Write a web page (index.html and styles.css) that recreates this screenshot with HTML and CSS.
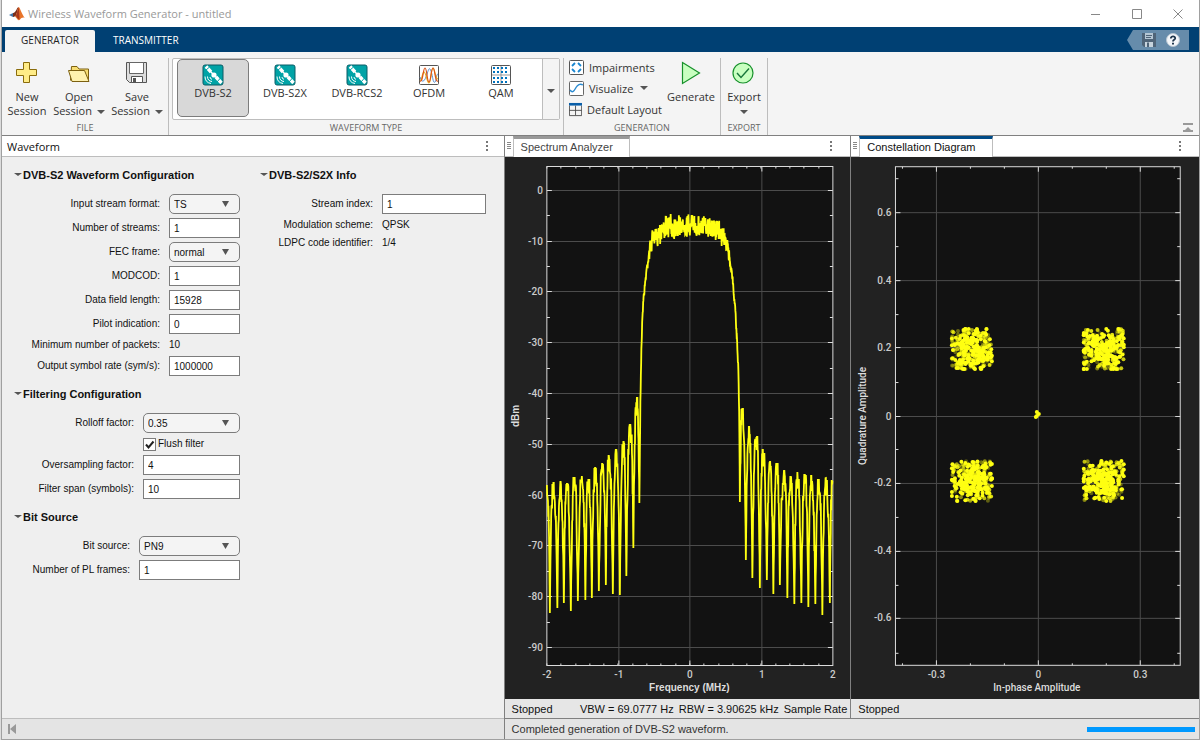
FILE: index.html
```html
<!DOCTYPE html>
<html lang="en">
<head>
<meta charset="utf-8">
<title>Wireless Waveform Generator - untitled</title>
<link rel="stylesheet" href="styles.css">
</head>
<body>
<svg class="defs" width="0" height="0" aria-hidden="true">
  <symbol id="satellite" viewBox="0 0 22 22">
    <rect x="1" y="1" width="20" height="20" rx="2" fill="#00a3a6" stroke="#0b5c66"/>
    <path d="M4 2.500l5 5.500M14 13l5.500 6" stroke="#fff" stroke-width="3.400"/>
    <path d="M3.500 6.500l4-3.500M15 18l3.500-4" stroke="#00a3a6"/>
    <path d="M8 7l7 7" stroke="#fff" stroke-width="1.500"/>
    <circle cx="12" cy="11" r="2.600" fill="#fff"/>
    <path d="M8 13q0 2 2 2.300M5.500 12.500q0 4.500 4.500 5M3 12.500q0 6 6 7" fill="none" stroke="#fff"/>
  </symbol>
  <symbol id="grip" viewBox="0 0 6 10">
    <path d="M1 1.500h4M1 3.500h4M1 5.500h4M1 7.500h4" stroke="#888"/>
  </symbol>
  <symbol id="dots" viewBox="0 0 4 12">
    <path d="M1 1h2v2H1zM1 5h2v2H1zM1 9h2v2H1z" fill="#777"/>
  </symbol>
</svg>

<div class="window">
  <header class="titlebar">
    <svg class="logo" width="16" height="14" viewBox="0 0 16 14">
      <path d="M0 8l4-2 3 2-3 2z" fill="#3f74a8"/>
      <path d="M4 6c3-.5 3.500-5 5.500-6L7 9l-3 1z" fill="#7a2f1c"/>
      <path d="M9.500 0C11 0 13 8 16 11c-2-1-4 0-5 1.500C10 14 8.500 13 7.500 11L6 9.500C8 7 8.500 2 9.500 0z" fill="#e8742a"/>
      <path d="M9.500 0c.5 3 1 8 1 12.500C9 12 8 11 7 9z" fill="#a8371c"/>
    </svg>
    <h1 class="app-title">Wireless Waveform Generator - untitled</h1>
    <div class="win-buttons">
      <button aria-label="Minimize"><svg width="12" height="12" viewBox="0 0 12 12"><path d="M1 6.500h9" stroke="#888"/></svg></button>
      <button aria-label="Maximize"><svg width="12" height="12" viewBox="0 0 12 12"><path d="M1.500 1.500h9v9h-9z" fill="none" stroke="#888"/></svg></button>
      <button aria-label="Close"><svg width="12" height="12" viewBox="0 0 12 12"><path d="M1.500 1.500l9 9M10.500 1.500l-9 9" stroke="#888"/></svg></button>
    </div>
  </header>

  <nav class="tabs">
    <button class="tab active">GENERATOR</button>
    <button class="tab">TRANSMITTER</button>
    <div class="quick">
      <button aria-label="Save"><svg width="16" height="16" viewBox="0 0 16 16">
        <path d="M1 1h14v14H3l-2-2z" fill="#4f6478"/><path d="M4 1h8v6H4z" fill="#b4c6d4"/><path d="M5 3.500h6M5 5.500h5" stroke="#4f6478"/><path d="M4 10h8v5H4z" fill="#c6d3dd"/><path d="M6 10.500h2V15H6z" fill="#4f6478"/>
      </svg></button>
      <button aria-label="Help"><svg width="14" height="14" viewBox="0 0 14 14">
        <circle cx="7" cy="7" r="6.500" fill="#f4f7fa" stroke="#b8c6d2"/><path d="M4.800 5.500c0-3 4.600-2.800 4.400 0C9 7 7 6.800 7 8.500" fill="none" stroke="#20374d" stroke-width="1.800"/><path d="M6 9.800h2v1.700H6z" fill="#20374d"/>
      </svg></button>
    </div>
  </nav>

  <div class="ribbon">
    <section class="group">
      <div class="tools file-tools">
        <button class="tool new"><svg width="24" height="24" viewBox="0 0 24 24"><path d="M8.500 1.500h6v7h7v6h-7v7h-6v-7h-7v-6h7z" fill="#ffec87" stroke="#8a6c0c"/></svg><span>New</span><span>Session</span></button>
        <button class="tool open"><svg width="24" height="24" viewBox="0 0 24 24"><path d="M3.500 19.500L4.500 5.500H10l2 2.500h9.500v11.500" fill="#f7dd72" stroke="#7c6010"/><path d="M1.500 9.500h16l4.500 11H5z" fill="#fff2ae" stroke="#7c6010"/></svg><span>Open</span><span>Session <i class="caret"></i></span></button>
        <button class="tool save"><svg width="24" height="24" viewBox="0 0 24 24"><path d="M1.500 1.500h20v20h-17l-3-3z" fill="#ddd" stroke="#555"/><path d="M4.500 1.500h14v11h-14z" fill="#fff" stroke="#666"/><path d="M6.500 15.500h11v6h-11z" fill="#fff" stroke="#555"/><path d="M8 17h3v4.500H8z" fill="#555"/></svg><span>Save</span><span>Session <i class="caret"></i></span></button>
      </div>
      <h2 class="group-name">FILE</h2>
    </section>

    <section class="group type-group">
      <div class="tools gallery">
        <button class="wave selected"><svg width="22" height="22"><use href="#satellite"/></svg><span>DVB-S2</span></button>
        <button class="wave"><svg width="22" height="22"><use href="#satellite"/></svg><span>DVB-S2X</span></button>
        <button class="wave"><svg width="22" height="22"><use href="#satellite"/></svg><span>DVB-RCS2</span></button>
        <button class="wave"><svg width="22" height="22" viewBox="0 0 22 22"><rect x="1.500" y="1.500" width="19" height="19" rx="1" fill="#fff" stroke="#555"/><g fill="none"><path d="M2 13c2 6 4 5 6 0s3-12 5-6 2 13 4 11 1-8 3-8" stroke="#5a8fd0"/><path d="M2 16c2 2 2-8 4-8s3 11 5 11 2-15 4-15 2 11 5 11" stroke="#edb120" stroke-width="1.200"/><path d="M2 17C5 19 5 4 7 4s2 14 4 14 2-14 4-14 2 15 5 13" stroke="#d95319" stroke-width="1.200"/></g></svg><span>OFDM</span></button>
        <button class="wave"><svg width="22" height="22" viewBox="0 0 22 22"><rect x="1.500" y="1.500" width="19" height="19" rx="1" fill="#fff" stroke="#555"/><path d="M11 2v18M2 11h18" stroke="#999"/><path d="M3 4h16M3 8h16M3 14h16M3 18h16" stroke="#0072bd" stroke-width="2" stroke-dasharray="2 2"/></svg><span>QAM</span></button>
        <button class="more" aria-label="More waveforms"><i class="caret"></i></button>
      </div>
      <h2 class="group-name">WAVEFORM TYPE</h2>
    </section>

    <section class="group">
      <div class="tools gen-tools">
        <div class="stack">
          <button class="line"><svg width="15" height="15" viewBox="0 0 15 15"><rect x=".5" y=".5" width="14" height="14" rx="1" fill="#fff" stroke="#555"/><path d="M3 6l3-3M9 3l3 3M3 9l3 3M12 9l-3 3" stroke="#1a86d0" stroke-width="1.800"/></svg><span>Impairments</span></button>
          <button class="line"><svg width="15" height="15" viewBox="0 0 15 15"><rect x=".5" y=".5" width="14" height="14" rx="1" fill="#fff" stroke="#666"/><path d="M1 9c3 4 4.500 0 6-2.500S11 2 14 4" fill="none" stroke="#2a8ad0" stroke-width="1.400"/></svg><span>Visualize</span><i class="caret"></i></button>
          <button class="line"><svg width="15" height="15" viewBox="0 0 15 15"><path d="M.5 3v11.500h14V3M.5 8.500h14M7.500 3v11" fill="none" stroke="#444"/><path d="M0 0h15v3H0z" fill="#0a5ea8"/></svg><span>Default Layout</span></button>
        </div>
        <button class="tool generate"><svg width="24" height="24" viewBox="0 0 24 24"><path d="M3.500 1.500l17 10.500-17 10.500z" fill="#c8ffc0" stroke="#17912b" stroke-width="1.200"/></svg><span>Generate</span></button>
      </div>
      <h2 class="group-name">GENERATION</h2>
    </section>

    <section class="group">
      <div class="tools">
        <button class="tool export"><svg width="24" height="24" viewBox="0 0 24 24"><circle cx="11" cy="12" r="10" fill="#c8ffc0" stroke="#17912b" stroke-width="1.200"/><path d="M5 12l4 4.500 8-9" fill="none" stroke="#17753a" stroke-width="1.400"/></svg><span>Export</span><span><i class="caret"></i></span></button>
      </div>
      <h2 class="group-name">EXPORT</h2>
    </section>
    <button class="collapse" aria-label="Collapse toolstrip"><svg width="10" height="10" viewBox="0 0 10 10"><path d="M0 0h10v2H0zM5 4l3 3h2v2H0V7h2z" fill="#999"/></svg></button>
  </div>

  <main class="main">
    <section class="left">
      <header class="pane-head"><h2>Waveform</h2><button class="menu" aria-label="Panel menu"><svg width="4" height="12"><use href="#dots"/></svg></button></header>
      <form class="form">
        <div class="form-col">
          <fieldset class="fields k71">
            <legend><i class="caret"></i>DVB-S2 Waveform Configuration</legend>
            <label for="fmt">Input stream format:</label><select id="fmt"><option>TS</option></select>
            <label for="ns">Number of streams:</label><input id="ns" value="1">
            <label for="fec">FEC frame:</label><select id="fec"><option>normal</option></select>
            <label for="mod">MODCOD:</label><input id="mod" value="1">
            <label for="dfl">Data field length:</label><input id="dfl" value="15928">
            <label for="pil">Pilot indication:</label><input id="pil" value="0">
            <label for="minp">Minimum number of packets:</label><output id="minp">10</output>
            <label for="rate">Output symbol rate (sym/s):</label><input id="rate" value="1000000">
          </fieldset>
          <fieldset class="fields k97">
            <legend><i class="caret"></i>Filtering Configuration</legend>
            <label for="roll">Rolloff factor:</label><select id="roll"><option>0.35</option></select>
            <label class="check" for="flush"><input type="checkbox" id="flush" checked>Flush filter</label>
            <label for="over">Oversampling factor:</label><input id="over" value="4">
            <label for="span">Filter span (symbols):</label><input id="span" value="10">
          </fieldset>
          <fieldset class="fields k101">
            <legend><i class="caret"></i>Bit Source</legend>
            <label for="src">Bit source:</label><select id="src"><option>PN9</option></select>
            <label for="pl">Number of PL frames:</label><input id="pl" value="1">
          </fieldset>
        </div>
        <div class="form-col">
          <fieldset class="fields k104">
            <legend><i class="caret"></i>DVB-S2/S2X Info</legend>
            <label for="idx">Stream index:</label><input id="idx" value="1">
            <label for="scheme">Modulation scheme:</label><output id="scheme">QPSK</output>
            <label for="ldpc">LDPC code identifier:</label><output id="ldpc">1/4</output>
          </fieldset>
        </div>
      </form>
      <footer class="bar"><button aria-label="Collapse panel"><svg width="10" height="12" viewBox="0 0 10 12"><path d="M1 1h2v10H1zM9 1v10L3 6z" fill="#999"/></svg></button></footer>
    </section>

    <section class="right">
      <div class="docs">
        <article class="doc spectrum">
          <header class="doc-head"><svg width="6" height="10"><use href="#grip"/></svg><h2 class="doc-tab">Spectrum Analyzer</h2><button class="menu" aria-label="Panel menu"><svg width="4" height="12"><use href="#dots"/></svg></button></header>
          <svg class="plot" id="spectrum" viewBox="505 157 345 542" role="img" aria-label="Spectrum"></svg>
          <footer class="readout"><span class="state">Stopped</span><span>VBW = 69.0777 Hz</span><span>RBW = 3.90625 kHz</span><span>Sample Rate</span></footer>
        </article>
        <article class="doc constellation">
          <header class="doc-head"><svg width="6" height="10"><use href="#grip"/></svg><h2 class="doc-tab current">Constellation Diagram</h2><button class="menu" aria-label="Panel menu"><svg width="4" height="12"><use href="#dots"/></svg></button></header>
          <svg class="plot" id="constellation" viewBox="851 157 348 542" role="img" aria-label="Constellation"></svg>
          <footer class="readout"><span>Stopped</span></footer>
        </article>
      </div>
      <footer class="bar status"><span>Completed generation of DVB-S2 waveform.</span><div class="progress"></div></footer>
    </section>
  </main>
</div>
<script src="plots.js"></script>
</body>
</html>
```
FILE: styles.css
```css
* { box-sizing: border-box; }
body {
  margin: 0;
  padding-left: 1px;
  background: #dcdcdc;
  font-family: "Liberation Sans", Arial, sans-serif;
  font-size: 11px;
  color: #111;
}
button {
  border: 0;
  padding: 0;
  background: none;
  font: inherit;
  color: inherit;
}
h1, h2 { margin: 0; font-weight: 400; font-size: inherit; }
svg { display: block; }
.defs { position: absolute; }

.window {
  display: flex;
  flex-direction: column;
  height: 100vh;
  border: 1px solid #a0a0a0;
  border-top: 0;
  background: #f4f4f4;
}

.titlebar {
  display: flex;
  align-items: center;
  height: 27px;
  padding: 0 15px 0 7px;
  background: #fff;
  font-family: "Open Sans", sans-serif;
  color: #999;
}
.app-title { margin-left: 3px; font-size: 11px; }
.win-buttons { display: flex; gap: 29px; margin-left: auto; }

.tabs {
  display: flex;
  align-items: flex-end;
  height: 25px;
  padding-left: 3px;
  background: #004073;
  font-family: "Open Sans", sans-serif;
  font-size: 10px;
  color: #fff;
}
.tab { height: 22px; padding: 0 18px 2px; }
.tab.active { width: 90px; padding: 0 0 2px; border-radius: 2px 2px 0 0; background: #f4f4f4; color: #222; }
.quick {
  display: flex;
  align-items: center;
  gap: 9px;
  height: 20px;
  margin: 0 10px 2px auto;
  padding: 0 9px 0 14px;
  background: #668cab;
  clip-path: polygon(6px 0, 100% 0, 100% 100%, 6px 100%, 0 50%);
}

.ribbon {
  display: flex;
  height: 84px;
  padding-top: 6px;
  border-bottom: 1px solid #808080;
  font-family: "Open Sans", sans-serif;
  font-size: 11px;
  color: #333;
}
.group {
  display: flex;
  flex-direction: column;
  border-right: 1px solid #bdbdbd;
}
.tools { display: flex; height: 62px; }
.group-name { margin: auto; padding-top: 1px; font-size: 9px; line-height: 12px; color: #666; }
.tool {
  display: flex;
  flex-direction: column;
  align-items: center;
  padding-top: 3px;
  line-height: 14px;
}
.tool svg { margin-bottom: 5px; }
.new { width: 50px; }
.open { width: 54px; }
.save { width: 62px; }
.generate { width: 58px; }
.export { width: 46px; }
.caret {
  display: inline-block;
  border: 4px solid transparent;
  border-top-color: #555;
  border-bottom: 0;
  vertical-align: 1px;
}
.tool .caret { margin-left: 2px; }
.export .caret { margin: 0; }
.type-group { padding: 0 3px; }
.gallery {
  padding-left: 4px;
  border: 1px solid #bdbdbd;
  border-radius: 2px;
  background: #fff;
}
.wave {
  display: flex;
  flex-direction: column;
  align-items: center;
  width: 72px;
  height: 58px;
  padding-top: 4px;
  border: 1px solid transparent;
  border-radius: 5px;
  line-height: 14px;
}
.wave.selected { border-color: #7c7c7c; background: #d8d8d8; }
.more { width: 17px; margin-left: 5px; border-left: 1px solid #bdbdbd; background: #f4f4f4; }
.gen-tools { padding-left: 5px; }
.stack { display: flex; flex-direction: column; gap: 5px; width: 93px; padding-top: 1px; white-space: nowrap; }
.line { display: flex; align-items: center; gap: 5px; height: 16px; }
.line .caret { margin-left: 2px; }
.collapse { margin: auto 6px 2px auto; }

.main { display: flex; flex: 1; min-height: 0; }
.left { display: flex; flex: 502 1 0; flex-direction: column; min-width: 0; background: #efefef; }
.pane-head {
  display: flex;
  align-items: center;
  height: 21px;
  padding: 0 15px 0 5px;
  border-bottom: 1px solid #bdbdbd;
  background: #fff;
  font-family: "Open Sans", sans-serif;
  font-size: 12px;
}
.pane-head h2 { font-size: 11px; }
.menu { margin-left: auto; }
.form { display: flex; flex: 1; gap: 20px; padding: 10px 12px; min-height: 0; }
.form-col { display: flex; flex-direction: column; gap: 10px; width: 226px; }
.fields {
  display: grid;
  gap: 4px 9px;
  align-items: center;
  margin: 0;
  padding: 0;
  border: 0;
  font-size: 10px;
}
.k71 { grid-template-columns: 1fr 71px; }
.k97 { grid-template-columns: 1fr 97px; }
.k101 { grid-template-columns: 1fr 101px; }
.k104 { grid-template-columns: 1fr 104px; }
.fields legend {
  height: 16px;
  margin-bottom: 11px;
  padding: 0;
  font-size: 11px;
  font-weight: 700;
  line-height: 16px;
}
legend .caret { margin-right: 1px; border-top-width: 3px; vertical-align: 3px; }
.fields label { justify-self: end; line-height: 14px; white-space: nowrap; }
.fields output { line-height: 14px; }
.fields input, .fields select {
  width: 100%;
  height: 20px;
  margin: 0;
  padding: 0 4px;
  border: 1px solid #7c7c7c;
  border-radius: 0;
  background: #fff;
  font: inherit;
  color: #111;
}
.fields select {
  appearance: none;
  border-radius: 5px;
  background: #f4f4f4 url("data:image/svg+xml,%3Csvg xmlns='http://www.w3.org/2000/svg' width='7' height='6'%3E%3Cpath d='M0 0h7L3.500 6z' fill='%23555'/%3E%3C/svg%3E") no-repeat right 10px center;
}
.fields .check { display: flex; grid-column: 2; justify-self: start; align-items: center; gap: 2px; height: 14px; }
.fields .check input {
  appearance: none;
  width: 13px;
  height: 13px;
  padding: 0;
  background: #fff url("data:image/svg+xml,%3Csvg xmlns='http://www.w3.org/2000/svg' width='11' height='11'%3E%3Cpath d='M2 5.500l2.500 3L9.500 2.500' fill='none' stroke='%23222' stroke-width='2'/%3E%3C/svg%3E") no-repeat center;
}

.bar {
  display: flex;
  align-items: center;
  height: 21px;
  padding: 0 5px;
  border-top: 1px solid #bdbdbd;
  background: #e4e4e4;
}
.right { display: flex; flex: 695 1 0; flex-direction: column; min-width: 0; border-left: 1px solid #808080; }
.docs { display: flex; flex: 1; min-height: 0; }
.doc { display: flex; flex-direction: column; min-width: 0; min-height: 0; background: #222; }
.spectrum { flex: 346 1 0; }
.constellation { flex: 348 1 0; border-left: 1px solid #808080; }
.doc-head {
  display: flex;
  flex: none;
  align-items: center;
  height: 21px;
  padding: 0 17px 0 1px;
  border-bottom: 1px solid #bdbdbd;
  background: #fff;
}
.doc-tab {
  height: 21px;
  margin-left: 1px;
  padding: 0 16px 0 7px;
  border: 1px solid #bdbdbd;
  border-top: 3px solid #999;
  border-bottom: 0;
  background: #fff;
  font-size: 11px;
  line-height: 17px;
  color: #444;
}
.doc-tab.current { border-top-color: #004b87; color: #111; }
.plot { flex: 1; width: 100%; min-height: 0; }
.readout {
  display: flex;
  flex: none;
  align-items: center;
  gap: 5px;
  height: 19px;
  padding: 0 3px 0 7px;
  overflow: hidden;
  background: #e6e6e6;
  white-space: nowrap;
}
.state { margin-right: auto; }
.status { gap: 8px; padding: 0 4px 0 7px; border-top-color: #808080; color: #333; }
.progress { width: 108px; height: 5px; margin-left: auto; background: #0099ff; }

.face { fill: #121212; stroke: #dcdcdc; }
.grid { stroke: #4c4c4c; }
.tick { stroke: #dcdcdc; }
.trace { fill: none; stroke: #ffff12; stroke-width: 1.8; }
.points { fill: #ffff12; }
.num { font-family: Roboto, sans-serif; font-size: 10px; font-weight: 500; fill: #ccc; }
.axis { font-family: "Liberation Sans", Arial, sans-serif; font-size: 10px; font-weight: 700; fill: #ddd; text-anchor: middle; }
.axis.mid { font-family: Roboto, sans-serif; font-weight: 500; }
.num.x { text-anchor: middle; }
.num.y { text-anchor: end; }
```
FILE: plots.js
```js
let seed = 7;
function rand() {
  seed = (seed * 16807) % 2147483647;
  return seed / 2147483647;
}

function line(cls, x1, y1, x2, y2) {
  return `<path class="${cls}" d="M${x1} ${y1}L${x2} ${y2}"/>`;
}

function snap(v) { return Math.floor(v) + 0.5; }

// Draws the plot face, grid lines, ticks and number labels.
function axes(o) {
  const { l, r, t, b } = o;
  let s = `<rect class="face" x="${l}" y="${t}" width="${r - l}" height="${b - t}"/>`;
  o.xs.forEach(([v, label]) => {
    const x = snap(v);
    if (x > l && x < r) s += line('grid', x, t + 1, x, b - 1) + line('tick', x, t, x, t + 5) + line('tick', x, b, x, b - 5);
    s += `<text class="num x" x="${x}" y="678">${label}</text>`;
  });
  o.ys.forEach(([v, label]) => {
    const y = snap(v);
    s += line('grid', l + 1, y, r - 1, y) + line('tick', l, y, l + 5, y) + line('tick', r, y, r - 5, y);
    s += `<text class="num y" x="${l - 4}" y="${y + 3}">${label}</text>`;
  });
  o.minorX.forEach(v => { const x = snap(v); s += line('tick', x, t, x, t + 2) + line('tick', x, b, x, b - 2); });
  o.minorY.forEach(v => { const y = snap(v); s += line('tick', l, y, l + 3, y) + line('tick', r, y, r - 3, y); });
  return s;
}

const range = (a, b, d) => { const out = []; for (let v = a; v <= b + 1e-6; v += d) out.push(v); return out; };

// Alternating null and peak positions of the side lobes.
const leftLobes = [[546.5, 485], [549.5, 613], [553, 483], [557, 608], [560, 482], [563.5, 603], [566.5, 484], [570.5, 611], [574, 478],
  [577.5, 601], [581.5, 476], [585, 600], [588, 479], [591.5, 598], [595, 468], [598.5, 591], [602, 464], [605.5, 585], [608.5, 456],
  [612.5, 594], [616, 450], [619.5, 595], [623, 442], [626, 576], [630, 425], [633, 548], [636.5, 398], [639, 503]];
const rightLobes = [[739.5, 502], [742, 408], [745.5, 560], [748.5, 427], [752, 578], [756, 437], [759.5, 588], [762.5, 450], [766.5, 580],
  [769.5, 462], [773, 594], [776.5, 463], [779.5, 585], [784, 471], [787, 598], [790, 476], [794, 604], [797, 472], [801, 603],
  [804.5, 475], [808, 607], [811, 476], [815, 604], [818.5, 479], [822, 615], [825.5, 478], [829.5, 603], [832, 481]];

function lobes(pts) {
  const out = [];
  for (let i = 0; i < pts.length - 1; i++) {
    const [x0, y0] = pts[i], [x1, y1] = pts[i + 1];
    const top = Math.min(y0, y1), depth = Math.abs(y1 - y0);
    for (let k = 0; k < 11; k++) {
      const t = k / 11;
      const u = y0 < y1 ? t : 1 - t;
      const jitter = u > 0.05 && u < 0.85 ? (rand() - 0.3) * 24 : 0;
      out.push([x0 + (x1 - x0) * t, Math.max(top, top + depth * Math.pow(u, 2.6) + jitter)]);
    }
  }
  out.push(pts[pts.length - 1]);
  return out;
}

function lerp(knots, x) {
  for (let i = 0; i < knots.length - 1; i++) {
    const [a, ya] = knots[i], [b, yb] = knots[i + 1];
    if (x <= b) return ya + (yb - ya) * (x - a) / (b - a);
  }
  return knots[knots.length - 1][1];
}

const band = [[639, 503], [640, 400], [641, 350], [642, 315], [643, 300], [645, 281], [647, 264], [649, 252], [651, 243], [653, 237],
  [657, 234], [662, 229], [668, 227], [690, 226], [710, 227], [718, 230], [723, 236], [726, 244], [729, 257], [731, 267], [733, 288],
  [735, 312], [736.5, 340], [738, 370], [739, 430], [739.5, 502]];
const pass = range(639, 739.5, 0.25).map(x => {
  const flat = x > 653 && x < 724 ? 1 : x > 646 && x < 731 ? 0.8 : 0.4;
  return [x, lerp(band, x) + (rand() + rand() - 1) * 13 * flat];
});
const trace = [...lobes(leftLobes), ...pass, ...lobes(rightLobes)];

document.getElementById('spectrum').innerHTML = axes({
  l: 546.5, r: 832.5, t: 166.5, b: 665.5,
  xs: [[546, '-2'], [618, '-1'], [689, '0'], [761, '1'], [832, '2']],
  ys: range(0, 9, 1).map(i => [190.3 + i * 50.8, i ? `-${i * 10}` : '0']),
  minorX: range(546.5, 832, 14.3),
  minorY: range(215.7, 640, 50.8)
}) + `<path class="trace" d="M${trace.map(p => p.map(v => v.toFixed(1)).join(' ')).join('L')}"/>
  <text class="axis" x="689" y="691">Frequency (MHz)</text>
  <text class="axis" transform="translate(519 416) rotate(-90)">dBm</text>`;

let dots = '';
[[972, 349], [1104, 349], [972, 481], [1104, 481]].forEach(([cx, cy]) => {
  for (let i = 0; i < 300; i++) {
    const wide = i % 2;
    const off = () => {
      const v = wide ? (rand() - 0.5) * 40 : (rand() + rand() + rand() - 1.5) * 20;
      return Math.max(-20, Math.min(20, v));
    };
    dots += `<circle cx="${(cx + off()).toFixed(1)}" cy="${(cy + off()).toFixed(1)}" r="2" opacity="${wide ? (0.15 + rand() * 0.85).toFixed(2) : 1}"/>`;
  }
});
[[1036, 417], [1037, 416], [1039, 414], [1037, 412]].forEach(([x, y]) => { dots += `<circle cx="${x}" cy="${y}" r="2"/>`; });

document.getElementById('constellation').innerHTML = axes({
  l: 895.5, r: 1180.5, t: 166.5, b: 665.5,
  xs: [[936, '-0.3'], [1038, '0'], [1140, '0.3']],
  ys: [[212, '0.6'], [280, '0.4'], [347, '0.2'], [416, '0'], [483, '-0.2'], [551, '-0.4'], [618, '-0.6']],
  minorX: [902, 970, 1004, 1072, 1106, 1174],
  minorY: [178, 246, 314, 382, 449, 517, 585, 653]
}) + `<g class="points">${dots}</g>
  <text class="axis mid" x="1037" y="691">In-phase Amplitude</text>
  <text class="axis mid" transform="translate(866 416) rotate(-90)">Quadrature Amplitude</text>`;
```
